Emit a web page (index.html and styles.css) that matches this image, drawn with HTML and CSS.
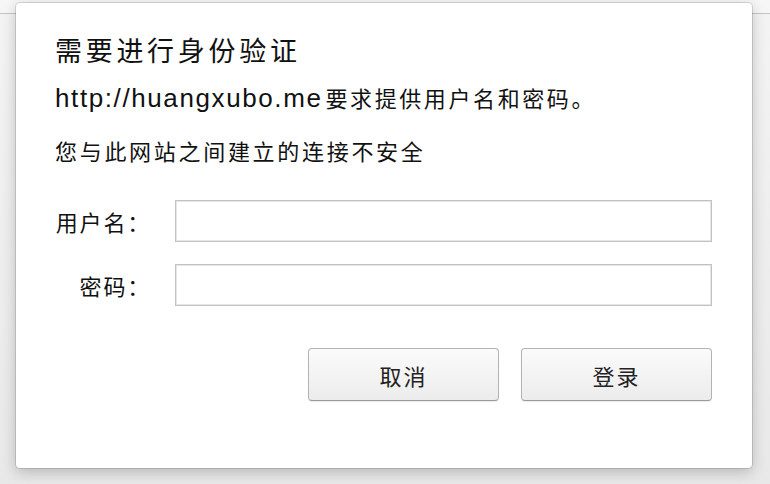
FILE: index.html
```html
<!DOCTYPE html>
<html lang="zh-CN">
<head>
<meta charset="utf-8">
<title>需要进行身份验证</title>
<link rel="stylesheet" href="styles.css">
</head>
<body>
<div class="backdrop">
  <div class="toolbar"></div>
  <div class="page"></div>
</div>
<div class="dialog">
  <h1 class="title">需要进行身份验证</h1>
  <p class="msg"><span class="url">http://huangxubo.me</span>要求提供用户名和密码。</p>
  <p class="warn">您与此网站之间建立的连接不安全</p>
  <form class="form">
    <label class="label" for="u">用户名：</label>
    <input class="field" id="u" type="text">
    <label class="label" for="p">密码：</label>
    <input class="field" id="p" type="password">
  </form>
  <div class="actions">
    <button class="btn" type="button">取消</button>
    <button class="btn" type="button">登录</button>
  </div>
</div>
</body>
</html>
```
FILE: styles.css
```css
html, body {
  margin: 0;
  padding: 0;
  width: 770px;
  height: 484px;
  overflow: hidden;
  font-family: "Noto Sans CJK SC", "Liberation Sans", sans-serif;
  color: #111;
}
.backdrop {
  display: flex;
  flex-direction: column;
  height: 484px;
}
.toolbar {
  height: 13px;
  background: #f6f6f6;
  border-bottom: 1px solid #c4c4c4;
}
.page {
  flex: 1;
  background: linear-gradient(#f3f3f3, #e8e8e8);
}
.dialog {
  position: absolute;
  left: 16px;
  top: 3px;
  width: 736px;
  height: 465px;
  box-sizing: border-box;
  background: #fff;
  border-radius: 4px;
  box-shadow: 0 0 0 1px rgba(0,0,0,0.12), 0 4px 14px rgba(0,0,0,0.22);
  padding: 32px 40px 0 39px;
}
.title {
  margin: 0;
  font-size: 27px;
  line-height: 30px;
  font-weight: 400;
  letter-spacing: 3.7px;
}
.msg {
  margin: 17px 0 0;
  font-size: 22px;
  line-height: 30px;
  letter-spacing: 2.6px;
}
.url {
  font-family: "Liberation Sans", sans-serif;
  font-size: 26px;
  letter-spacing: 1.6px;
  margin-right: 3px;
}
.warn {
  margin: 22px 0 0;
  font-size: 22px;
  line-height: 30px;
  letter-spacing: 2.7px;
}
.form {
  margin: 35px 0 0;
  display: grid;
  grid-template-columns: 102px 1fr;
  column-gap: 18px;
  row-gap: 22px;
  align-items: center;
}
.label {
  font-size: 22px;
  line-height: 30px;
  letter-spacing: 1.8px;
  text-align: right;
  white-space: nowrap;
  padding-right: 6px;
}
.field {
  box-sizing: border-box;
  height: 42px;
  margin: 0;
  border: 1px solid #c2c2c2;
  box-shadow: inset 0 0 0 1px #e6e6e6;
  background: #fff;
  border-radius: 0;
  outline: none;
}
.actions {
  margin-top: 42px;
  display: flex;
  justify-content: flex-end;
  gap: 22px;
}
.btn {
  box-sizing: border-box;
  width: 191px;
  height: 53px;
  margin: 0;
  border: 1px solid #b3b3b3;
  border-bottom-color: #9a9a9a;
  border-radius: 4px;
  background: linear-gradient(#fbfbfb, #ececec);
  box-shadow: 0 1px 1px rgba(0,0,0,0.08);
  font-family: "Noto Sans CJK SC", sans-serif;
  font-size: 22px;
  letter-spacing: 2px;
  color: #222;
  padding: 0;
}
```
